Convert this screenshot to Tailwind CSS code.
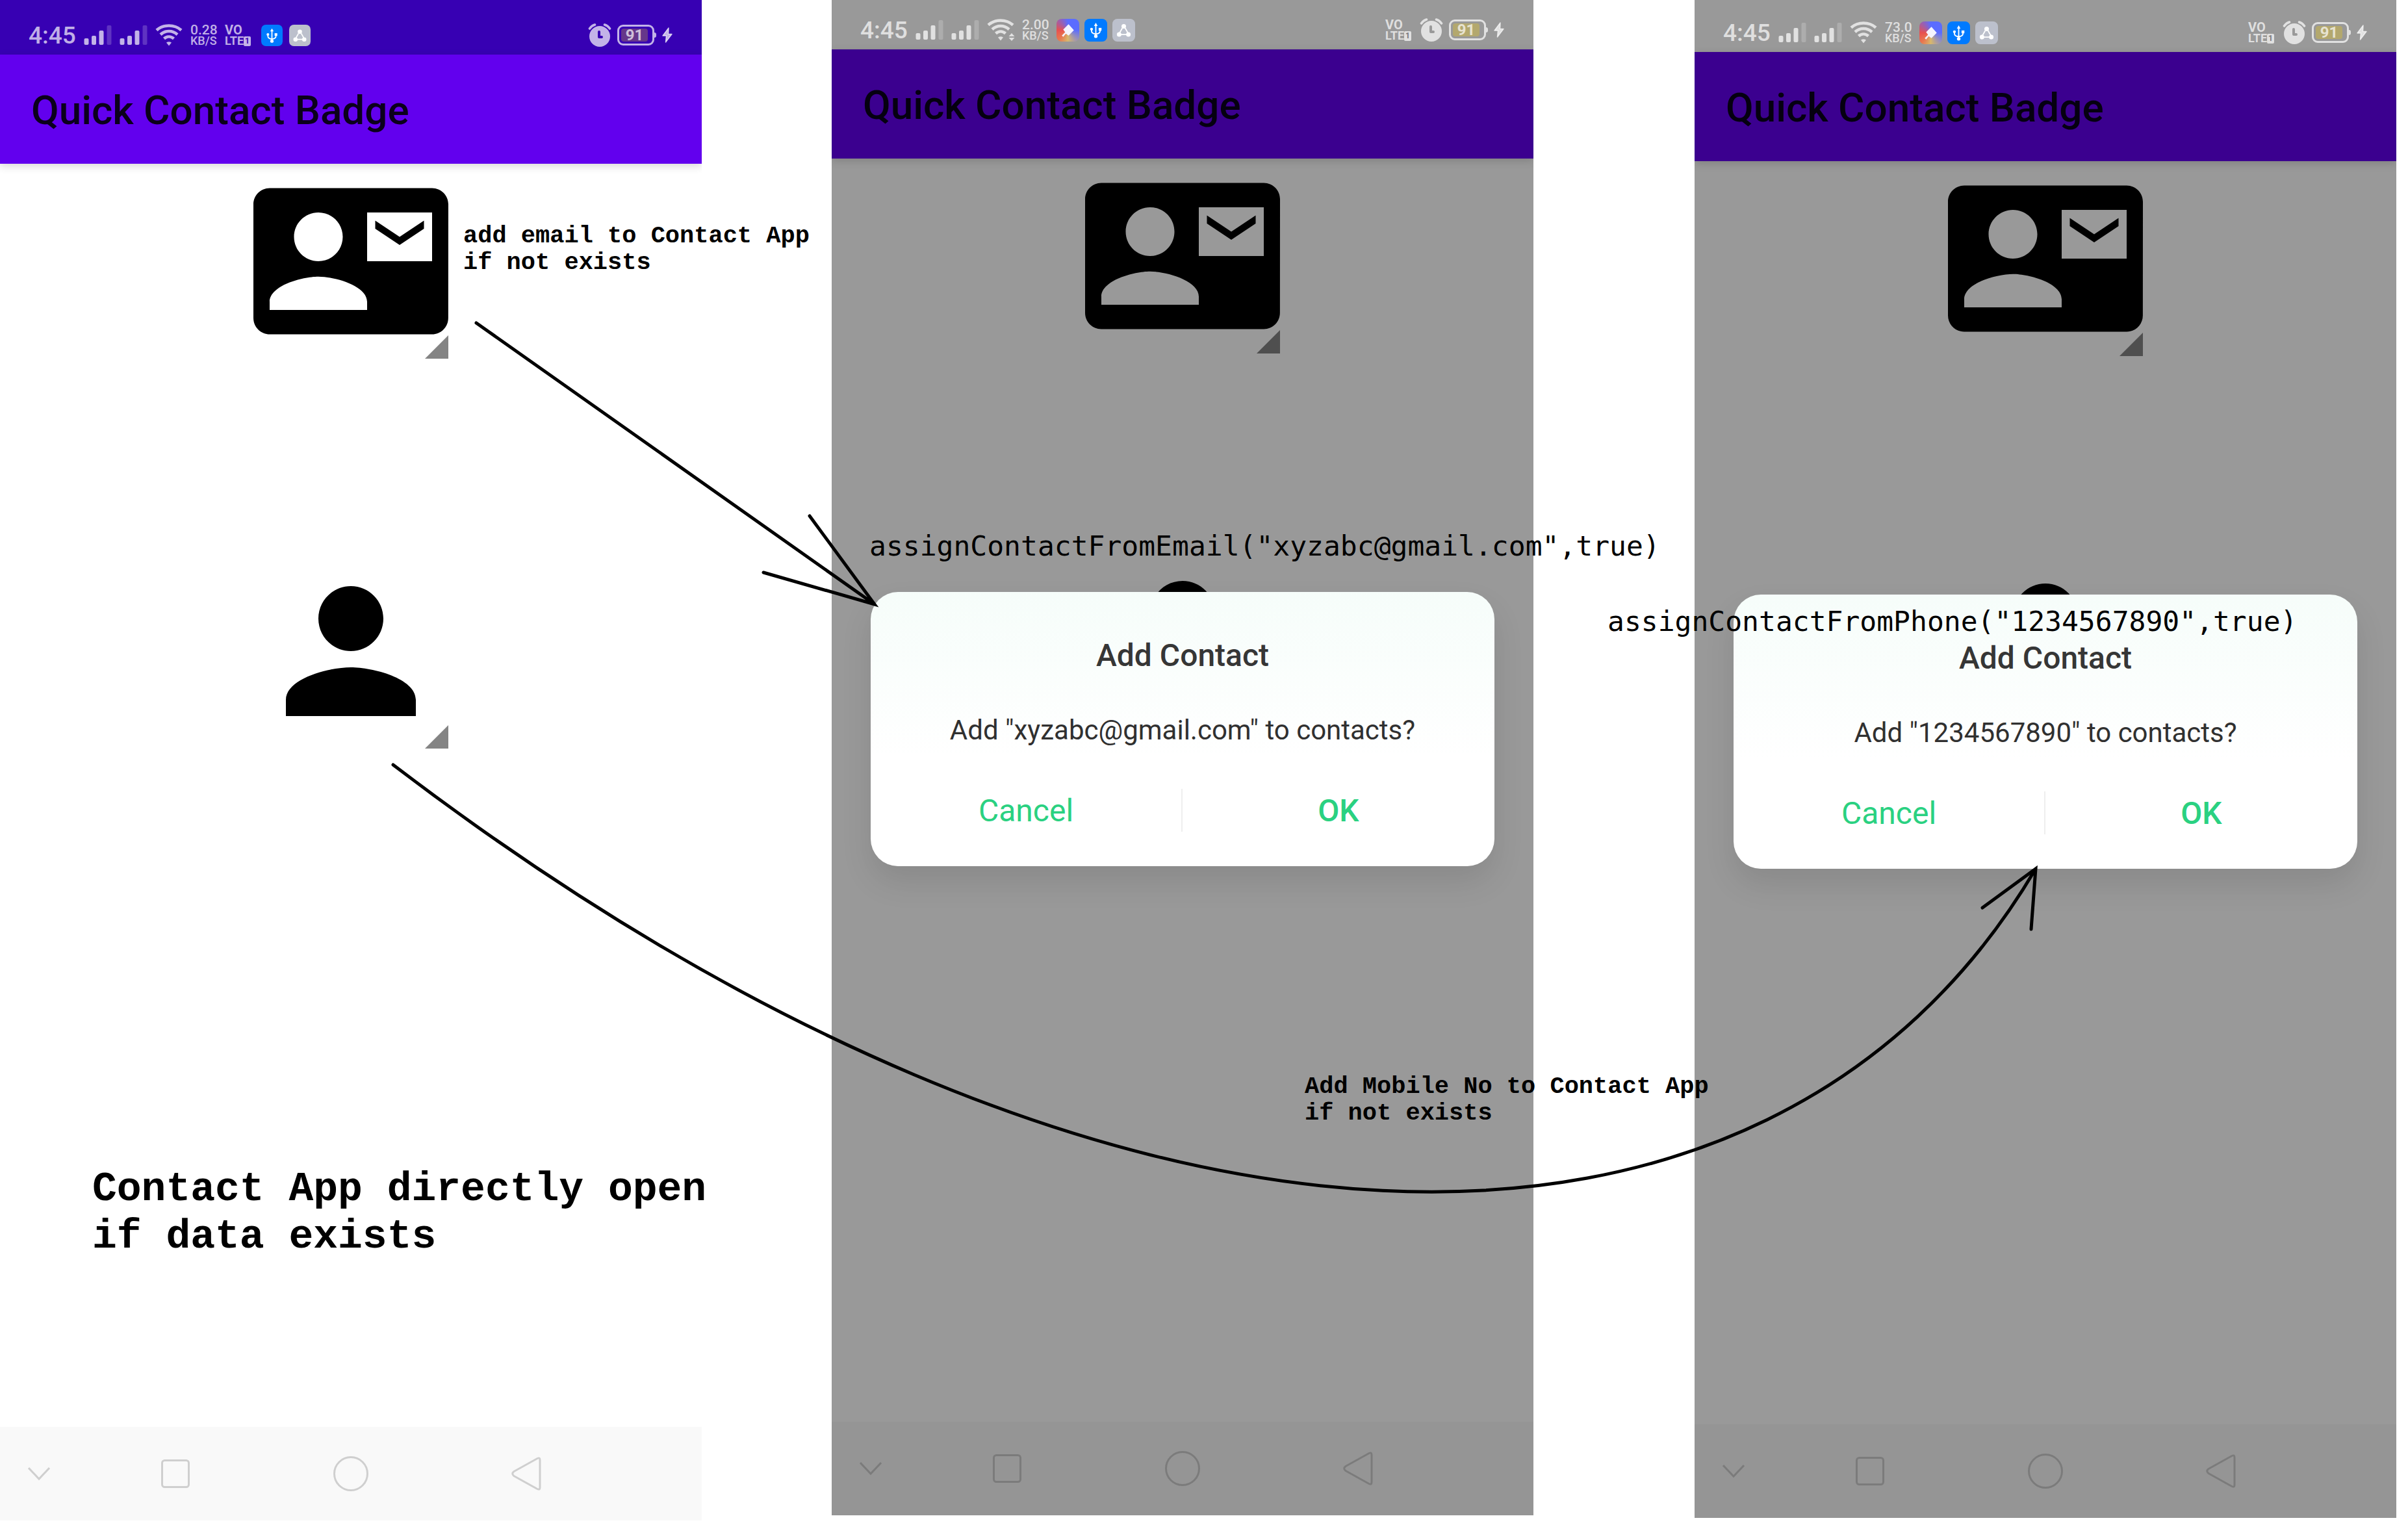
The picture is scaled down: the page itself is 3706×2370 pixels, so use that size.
<!DOCTYPE html>
<html lang="en">
<head>
<meta charset="utf-8">
<title>Quick Contact Badge</title>
<script src="https://cdn.jsdelivr.net/npm/@tailwindcss/browser@4"></script>
</head>
<body class="bg-white font-['Roboto',sans-serif]">

<!-- Shared icons -->
<svg class="hidden" aria-hidden="true">
  <symbol id="signal" viewBox="0 0 42 32">
    <g fill="currentColor"><rect x="0" y="21" width="7" height="10" rx="2"/><rect x="11.500" y="17" width="7" height="14" rx="2"/><rect x="23" y="9" width="7" height="22" rx="2"/></g>
    <rect x="35" y="1" width="7" height="30" rx="2" fill="#fff" fill-opacity=".2"/>
  </symbol>
  <symbol id="wifi" viewBox="0 0 41 34">
    <g fill="none" stroke="currentColor" stroke-width="4.600">
      <path d="M1.500 9.500C12 .2 29 .2 39.500 9.500"/>
      <path d="M7.500 16.200C15 9.300 26 9.300 33.500 16.200"/>
      <path d="M13 22.500c4.500-4 10.500-4 15 0"/>
    </g>
    <path fill="currentColor" d="M16.500 28.500q4-2.500 8 0L20.500 33.500z"/>
  </symbol>
  <symbol id="alarm" viewBox="0 0 35 36">
    <path fill="none" stroke="currentColor" stroke-width="3.600" stroke-linecap="round" d="M2 8Q5 3.500 10 2M33 8Q30 3.500 25 2"/>
    <path fill="currentColor" fill-rule="evenodd" d="M17.500 4a16 16 0 1 0 0 32a16 16 0 1 0 0-32zM14.500 13a2 2 0 0 1 4 0v6h2a2 2 0 0 1 0 4h-4a2 2 0 0 1-2-2z"/>
  </symbol>
  <symbol id="bolt" viewBox="0 0 16 24">
    <path fill="currentColor" stroke="currentColor" stroke-width="1.500" stroke-linejoin="round" d="M10 1L1 13h5.500L5.500 23L15 10.500H9.500z"/>
  </symbol>
  <symbol id="usb" viewBox="0 0 32 32">
    <rect width="32" height="32" rx="7" fill="#007aff"/>
    <path fill="none" stroke="#fff" stroke-width="1.700" d="M16 9v16M10 15v2q0 4 6 4.500q6-.5 6-4.500v-2"/>
    <g fill="#fff"><path d="M16 5.500l2.600 4.500h-5.200z"/><circle cx="10" cy="14.500" r="2"/><rect x="20" y="12.700" width="4" height="4"/><circle cx="16" cy="24.500" r="2.500"/></g>
  </symbol>
  <symbol id="share" viewBox="0 0 32 32">
    <rect width="32" height="32" rx="7" fill="#bcc0cc"/>
    <path fill="none" stroke="#fff" stroke-width="1.700" d="M14 13l-4 7M18 13l4 7M12 22h8"/>
    <g fill="#fff"><circle cx="16" cy="10.500" r="3.200"/><circle cx="9.500" cy="22" r="3.200"/><circle cx="22.500" cy="22" r="3.200"/></g>
  </symbol>
  <symbol id="contact-mail" viewBox="0 0 24 24">
    <path d="M21 8V7l-3 2-3-2v1l3 2 3-2zm1-5H2C.9 3 0 3.900 0 5v14c0 1.100.9 2 2 2h20c1.100 0 1.990-.9 1.990-2L24 5c0-1.100-.9-2-2-2zM8 6c1.660 0 3 1.340 3 3s-1.340 3-3 3-3-1.340-3-3 1.340-3 3-3zm6 12H2v-1c0-2 4-3.100 6-3.100s6 1.100 6 3.100v1zm8-6h-8V6h8v6z"/>
  </symbol>
  <symbol id="person" viewBox="0 0 24 24">
    <path d="M12 12c2.210 0 4-1.790 4-4s-1.790-4-4-4-4 1.790-4 4 1.790 4 4 4zm0 2c-2.670 0-8 1.340-8 4v2h16v-2c0-2.660-5.330-4-8-4z"/>
  </symbol>
  <symbol id="corner" viewBox="0 0 36 36"><path fill="currentColor" d="M36 0v36H0z"/></symbol>
  <symbol id="nav-down" viewBox="0 0 34 22"><path fill="none" stroke="currentColor" stroke-width="3" d="M1 2l16 17L33 2"/></symbol>
  <symbol id="nav-recent" viewBox="0 0 44 44"><rect x="1.500" y="1.500" width="41" height="41" rx="4" fill="none" stroke="currentColor" stroke-width="3"/></symbol>
  <symbol id="nav-home" viewBox="0 0 54 54"><circle cx="27" cy="27" r="25.500" fill="none" stroke="currentColor" stroke-width="3"/></symbol>
  <symbol id="nav-back" viewBox="0 0 46 52"><path fill="none" stroke="currentColor" stroke-width="3" stroke-linejoin="round" d="M40 2.500Q44 .5 44 5v42q0 4.500-4 2.500L4 29.500q-4.500-3.500 0-7z"/></symbol>
</svg>

<main class="relative grid min-h-screen grid-cols-[1080fr_200fr_1080fr_248fr_1080fr_18fr] overflow-hidden">

  <!-- First phone: the two badges -->
  <section class="col-start-1 mb-[30px] flex flex-col overflow-hidden bg-white">
    <header>
      <div class="flex h-[84px] items-center justify-between bg-[#3700b3] pt-6 pr-[45px] pl-11 text-white/70">
        <div class="flex items-center gap-3">
          <span class="w-[73px] text-[37px] leading-none font-medium">4:45</span>
          <svg class="h-8 w-[43px]"><use href="#signal"/></svg>
          <svg class="h-8 w-[43px]"><use href="#signal"/></svg>
          <svg class="h-[34px] w-[42px]"><use href="#wifi"/></svg>
          <span class="flex w-[41px] flex-col font-medium"><span class="text-[21px] leading-[18px]">0.28</span><span class="text-[18px] leading-4">KB/S</span></span>
          <span class="flex w-[44px] flex-col font-bold"><span class="text-[20px] leading-[18px]">VO</span><span class="flex items-center text-[18px] leading-4">LTE<span class="h-[15px] w-[11px] rounded-[2px] bg-[#c3b2e8] text-center text-[12px] leading-[15px] text-[#3700b3]">1</span></span></span>
          <span class="flex gap-[10px]">
            <svg class="size-[33px]"><use href="#usb"/></svg>
            <svg class="size-[33px]"><use href="#share"/></svg>
          </span>
        </div>
        <div class="flex items-center gap-[9px]">
          <svg class="h-9 w-9"><use href="#alarm"/></svg>
          <span class="flex items-center"><span class="h-8 w-[57px] rounded-[9px] border-3 border-white/70 p-[3px]"><span class="block h-5 w-[41px] rounded-[4px] bg-[#66378a] text-center text-[24px] leading-[21px] font-bold">91</span></span><span class="h-2 w-[3px] rounded-r-full bg-white/70"></span></span>
          <svg class="h-6 w-4"><use href="#bolt"/></svg>
        </div>
      </div>
      <div class="flex h-[168px] items-center bg-[#6200ee] px-12 pt-1 shadow-[0_4px_12px_rgba(0,0,0,0.15)]">
        <h1 class="text-[62px] leading-none font-medium text-[#0b001b]">Quick Contact Badge</h1>
      </div>
    </header>
    <div class="flex flex-1 flex-col items-center gap-[300px]">
      <button class="relative size-[300px]" aria-label="Contact by email">
        <svg class="size-full"><use href="#contact-mail"/></svg>
        <svg class="absolute right-0 bottom-0 size-9 text-[#848484]"><use href="#corner"/></svg>
      </button>
      <button class="relative size-[300px]" aria-label="Contact by phone">
        <svg class="size-full"><use href="#person"/></svg>
        <svg class="absolute right-0 bottom-0 size-9 text-[#848484]"><use href="#corner"/></svg>
      </button>
    </div>
    <nav class="grid h-36 grid-cols-[120fr_300fr_240fr_300fr_120fr] place-items-center bg-[#f9f9f9] text-black/17">
      <button aria-label="Hide"><svg class="block h-[22px] w-[34px]"><use href="#nav-down"/></svg></button>
      <button aria-label="Recent apps"><svg class="block size-11"><use href="#nav-recent"/></svg></button>
      <button aria-label="Home"><svg class="block size-[54px]"><use href="#nav-home"/></svg></button>
      <button aria-label="Back"><svg class="block h-[52px] w-[46px]"><use href="#nav-back"/></svg></button>
    </nav>
  </section>

  <!-- Second phone: dialog for the email address -->
  <section class="col-start-3 mb-[38px] flex flex-col overflow-hidden bg-[#999999]">
    <header>
      <div class="flex h-[76px] items-center justify-between pt-4 pr-[45px] pl-11 text-white/70">
        <div class="flex items-center gap-3">
          <span class="w-[73px] text-[37px] leading-none font-medium">4:45</span>
          <svg class="h-8 w-[43px]"><use href="#signal"/></svg>
          <svg class="h-8 w-[43px]"><use href="#signal"/></svg>
          <span class="relative">
            <svg class="h-[34px] w-[42px]"><use href="#wifi"/></svg>
            <svg class="absolute -right-px bottom-0 h-3 w-[10px] bg-[#999999]" viewBox="0 0 10 12"><path fill="#e0e0e0" d="M5 0l4.500 5h-9zM.5 7h9L5 12z"/></svg>
          </span>
          <span class="flex w-[41px] flex-col font-medium"><span class="text-[21px] leading-[18px]">2.00</span><span class="text-[18px] leading-4">KB/S</span></span>
          <span class="flex gap-2">
            <span class="size-[35px] rounded-[8px] bg-[conic-gradient(#5b6cff,#5b6cff_90deg,#d8b86c_180deg,#e8754f_225deg,#e8504f_270deg,#5b6cff_360deg)]"><svg class="size-full" viewBox="0 0 34 34"><path fill="#f4f3ff" d="M18 8l8 9-8 8-4-3-4 5-2-2 5-5-3-4z"/></svg></span>
            <svg class="size-[35px]"><use href="#usb"/></svg>
            <svg class="size-[35px]"><use href="#share"/></svg>
          </span>
        </div>
        <div class="flex items-center gap-[9px]">
          <span class="flex w-[44px] flex-col font-bold"><span class="text-[20px] leading-[18px]">VO</span><span class="flex items-center text-[18px] leading-4">LTE<span class="h-[15px] w-[11px] rounded-[2px] bg-[#e0e0e0] text-center text-[12px] leading-[15px] text-[#777777]">1</span></span></span>
          <svg class="h-9 w-9"><use href="#alarm"/></svg>
          <span class="flex items-center"><span class="h-8 w-[57px] rounded-[9px] border-3 border-white/70 p-[3px]"><span class="block h-5 w-[41px] rounded-[4px] bg-[#b3a86e] text-center text-[24px] leading-[21px] font-bold">91</span></span><span class="h-2 w-[3px] rounded-r-full bg-white/70"></span></span>
          <svg class="h-6 w-4"><use href="#bolt"/></svg>
        </div>
      </div>
      <div class="flex h-[168px] items-center bg-[#3b008f] px-12 pt-1 shadow-[0_4px_12px_rgba(0,0,0,0.15)]">
        <h1 class="text-[62px] leading-none font-medium text-[#050010]">Quick Contact Badge</h1>
      </div>
    </header>
    <div class="relative flex flex-1 flex-col items-center gap-[300px]">
      <button class="relative size-[300px]" aria-label="Contact by email">
        <svg class="size-full"><use href="#contact-mail"/></svg>
        <svg class="absolute right-0 bottom-0 size-9 text-[#4f4f4f]"><use href="#corner"/></svg>
      </button>
      <button class="relative size-[300px]" aria-label="Contact by phone">
        <svg class="size-full"><use href="#person"/></svg>
        <svg class="absolute right-0 bottom-0 size-9 text-[#4f4f4f]"><use href="#corner"/></svg>
      </button>
      <div role="dialog" aria-label="Add Contact" class="absolute inset-x-[60px] top-[667px] flex flex-col rounded-[42px] bg-linear-to-b from-[#f6fdfa] to-white to-60% pt-[70px] pb-[53px] text-center shadow-[0_24px_48px_rgba(0,0,0,0.1)]">
        <h2 class="text-[48px] leading-[56px] font-medium text-[#363636]">Add Contact</h2>
        <p class="mt-[62px] text-[42px] leading-[50px] text-[#303030]">Add "xyzabc@gmail.com" to contacts?</p>
        <div class="mt-[65px] grid h-[66px] grid-cols-2 divide-x-2 divide-[#eeeeee] text-[48px] leading-none text-[#2ad181]">
          <button class="pt-[2px]">Cancel</button>
          <button class="pt-[2px] font-medium">OK</button>
        </div>
      </div>
    </div>
    <nav class="grid h-36 grid-cols-[120fr_300fr_240fr_300fr_120fr] place-items-center bg-[#959595] text-black/17">
      <button aria-label="Hide"><svg class="block h-[22px] w-[34px]"><use href="#nav-down"/></svg></button>
      <button aria-label="Recent apps"><svg class="block size-11"><use href="#nav-recent"/></svg></button>
      <button aria-label="Home"><svg class="block size-[54px]"><use href="#nav-home"/></svg></button>
      <button aria-label="Back"><svg class="block h-[52px] w-[46px]"><use href="#nav-back"/></svg></button>
    </nav>
  </section>

  <!-- Third phone: dialog for the phone number -->
  <section class="col-start-5 mb-[34px] flex flex-col overflow-hidden bg-[#999999]">
    <header>
      <div class="flex h-20 items-center justify-between pt-5 pr-[45px] pl-11 text-white/70">
        <div class="flex items-center gap-3">
          <span class="w-[73px] text-[37px] leading-none font-medium">4:45</span>
          <svg class="h-8 w-[43px]"><use href="#signal"/></svg>
          <svg class="h-8 w-[43px]"><use href="#signal"/></svg>
          <svg class="h-[34px] w-[42px]"><use href="#wifi"/></svg>
          <span class="flex w-[41px] flex-col font-medium"><span class="text-[21px] leading-[18px]">73.0</span><span class="text-[18px] leading-4">KB/S</span></span>
          <span class="flex gap-2">
            <span class="size-[35px] rounded-[8px] bg-[conic-gradient(#5b6cff,#5b6cff_90deg,#d8b86c_180deg,#e8754f_225deg,#e8504f_270deg,#5b6cff_360deg)]"><svg class="size-full" viewBox="0 0 34 34"><path fill="#f4f3ff" d="M18 8l8 9-8 8-4-3-4 5-2-2 5-5-3-4z"/></svg></span>
            <svg class="size-[35px]"><use href="#usb"/></svg>
            <svg class="size-[35px]"><use href="#share"/></svg>
          </span>
        </div>
        <div class="flex items-center gap-[9px]">
          <span class="flex w-[44px] flex-col font-bold"><span class="text-[20px] leading-[18px]">VO</span><span class="flex items-center text-[18px] leading-4">LTE<span class="h-[15px] w-[11px] rounded-[2px] bg-[#e0e0e0] text-center text-[12px] leading-[15px] text-[#777777]">1</span></span></span>
          <svg class="h-9 w-9"><use href="#alarm"/></svg>
          <span class="flex items-center"><span class="h-8 w-[57px] rounded-[9px] border-3 border-white/70 p-[3px]"><span class="block h-5 w-[41px] rounded-[4px] bg-[#b3a86e] text-center text-[24px] leading-[21px] font-bold">91</span></span><span class="h-2 w-[3px] rounded-r-full bg-white/70"></span></span>
          <svg class="h-6 w-4"><use href="#bolt"/></svg>
        </div>
      </div>
      <div class="flex h-[168px] items-center bg-[#3b008f] px-12 pt-1 shadow-[0_4px_12px_rgba(0,0,0,0.15)]">
        <h1 class="text-[62px] leading-none font-medium text-[#050010]">Quick Contact Badge</h1>
      </div>
    </header>
    <div class="relative flex flex-1 flex-col items-center gap-[300px]">
      <button class="relative size-[300px]" aria-label="Contact by email">
        <svg class="size-full"><use href="#contact-mail"/></svg>
        <svg class="absolute right-0 bottom-0 size-9 text-[#4f4f4f]"><use href="#corner"/></svg>
      </button>
      <button class="relative size-[300px]" aria-label="Contact by phone">
        <svg class="size-full"><use href="#person"/></svg>
        <svg class="absolute right-0 bottom-0 size-9 text-[#4f4f4f]"><use href="#corner"/></svg>
      </button>
      <div role="dialog" aria-label="Add Contact" class="absolute inset-x-[60px] top-[667px] flex flex-col rounded-[42px] bg-linear-to-b from-[#f6fdfa] to-white to-60% pt-[70px] pb-[53px] text-center shadow-[0_24px_48px_rgba(0,0,0,0.1)]">
        <h2 class="text-[48px] leading-[56px] font-medium text-[#363636]">Add Contact</h2>
        <p class="mt-[62px] text-[42px] leading-[50px] text-[#303030]">Add "1234567890" to contacts?</p>
        <div class="mt-[65px] grid h-[66px] grid-cols-2 divide-x-2 divide-[#eeeeee] text-[48px] leading-none text-[#2ad181]">
          <button class="pt-[2px]">Cancel</button>
          <button class="pt-[2px] font-medium">OK</button>
        </div>
      </div>
    </div>
    <nav class="grid h-36 grid-cols-[120fr_300fr_240fr_300fr_120fr] place-items-center bg-[#959595] text-black/17">
      <button aria-label="Hide"><svg class="block h-[22px] w-[34px]"><use href="#nav-down"/></svg></button>
      <button aria-label="Recent apps"><svg class="block size-11"><use href="#nav-recent"/></svg></button>
      <button aria-label="Home"><svg class="block size-[54px]"><use href="#nav-home"/></svg></button>
      <button aria-label="Back"><svg class="block h-[52px] w-[46px]"><use href="#nav-back"/></svg></button>
    </nav>
  </section>

  <!-- Arrows and notes drawn over the phones -->
  <svg class="pointer-events-none absolute top-0 left-0 w-full" viewBox="0 0 3706 2370" fill="none" stroke="#000" stroke-width="5" stroke-linecap="round" aria-hidden="true">
    <path d="M733 497L1346 930M1246 794L1346 930L1175 881"/>
    <path d="M605 1177C1705 2016 2723 2032 3133 1337M3051 1397L3133 1337L3126 1430"/>
  </svg>
  <p class="absolute top-[343px] left-[713px] font-['Liberation_Mono',monospace] text-[37px] leading-[41px] font-bold whitespace-nowrap">add email to Contact App<br>if not exists</p>
  <p class="absolute top-[1652px] left-[2008px] font-['Liberation_Mono',monospace] text-[37px] leading-[41px] font-bold whitespace-nowrap">Add Mobile No to Contact App<br>if not exists</p>
  <p class="absolute top-[1794px] left-[142px] font-['Liberation_Mono',monospace] text-[63px] leading-[73px] font-bold whitespace-nowrap">Contact App directly open<br>if data exists</p>
  <p class="absolute top-[812px] left-[1338px] font-['DejaVu_Sans_Mono',monospace] text-[43px] leading-[56px] whitespace-nowrap">assignContactFromEmail("xyzabc@gmail.com",true)</p>
  <p class="absolute top-[928px] left-[2474px] font-['DejaVu_Sans_Mono',monospace] text-[43px] leading-[56px] whitespace-nowrap">assignContactFromPhone("1234567890",true)</p>
</main>
</body>
</html>
